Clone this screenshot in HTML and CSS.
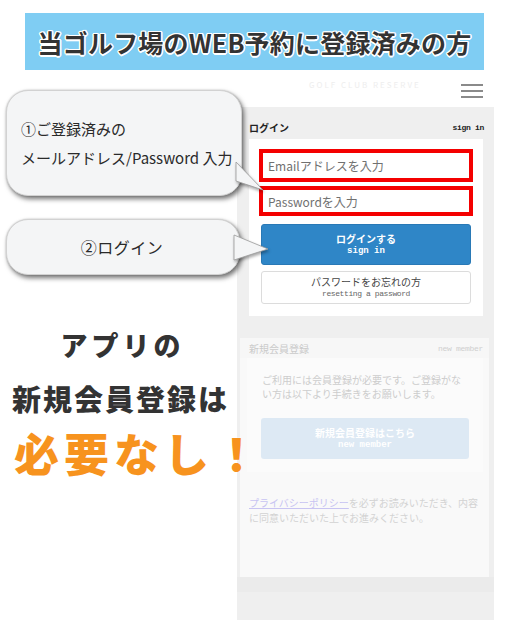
FILE: index.html
```html
<!DOCTYPE html>
<html lang="ja">
<head>
<meta charset="utf-8">
<title>WEB予約登録済みの方</title>
<link rel="stylesheet" href="styles.css">
</head>
<body>
<div class="banner">当ゴルフ場のWEB予約に登録済みの方</div>
<div class="stage">
  <div class="left">
    <div class="bubble bubble-one">
      <p>①ご登録済みの</p>
      <p>メールアドレス/Password 入力</p>
    </div>
    <div class="bubble bubble-two">②ログイン</div>
    <p class="copy copy-a">アプリの</p>
    <p class="copy copy-b">新規会員登録は</p>
    <p class="copy copy-c">必要なし！</p>
  </div>
  <div class="phone">
    <div class="phone-top">
      <span class="faint-logo">GOLF CLUB RESERVE</span>
      <div class="burger"><i></i><i></i><i></i></div>
    </div>
    <div class="phone-body">
      <div class="sec-head">
        <span class="sec-title">ログイン</span>
        <span class="sec-en">sign in</span>
      </div>
      <div class="card">
        <div class="field field-email">Emailアドレスを入力</div>
        <div class="field field-pass">Passwordを入力</div>
        <div class="btn btn-login"><span>ログインする</span><span class="mono">sign in</span></div>
        <div class="btn btn-forgot"><span>パスワードをお忘れの方</span><span class="mono small">resetting a password</span></div>
      </div>
      <div class="faded">
        <div class="faded-head">
          <span class="sec-title">新規会員登録</span>
          <span class="sec-en">new member</span>
        </div>
        <div class="faded-card">
          <p class="faded-text">ご利用には会員登録が必要です。ご登録がない方は以下より手続きをお願いします。</p>
          <div class="btn btn-new"><span>新規会員登録はこちら</span><span class="mono">new member</span></div>
        </div>
        <p class="privacy"><span class="link">プライバシーポリシー</span>を必ずお読みいただき、内容に同意いただいた上でお進みください。</p>
      </div>
      <div class="strip"></div>
    </div>
  </div>
  <svg class="tails" width="300" height="220" viewBox="0 0 300 220">
    <polygon points="236,92 263,120 236,111" fill="#f4f5f6" stroke="#9a9a9a" stroke-width="0.8"/>
    <polygon points="234,165 268,179 234,190" fill="#f4f5f6" stroke="#9a9a9a" stroke-width="0.8"/>
  </svg>
</div>
</body>
</html>
```
FILE: styles.css
```css
* { box-sizing: border-box; }
html, body { margin: 0; padding: 0; }
body {
  width: 506px;
  height: 634px;
  overflow: hidden;
  background: #fff;
  font-family: "Noto Sans CJK JP", "Noto Sans", sans-serif;
  color: #333;
}
p { margin: 0; }

.banner {
  margin: 13px 22px 0 25px;
  height: 57px;
  background: #7fcdf3;
  display: flex;
  align-items: center;
  justify-content: center;
  font-size: 25px;
  font-weight: 700;
  color: #333;
  letter-spacing: 0.2px;
  text-shadow: 1px 1px 0 #fff, -1px -1px 0 #fff, 1px -1px 0 #fff, -1px 1px 0 #fff,
    0 1.5px 0 #fff, 0 -1.5px 0 #fff, 1.5px 0 0 #fff, -1.5px 0 0 #fff;
}

.stage {
  display: flex;
  position: relative;
}
.left {
  width: 237px;
  flex: none;
  position: relative;
  z-index: 2;
}
.bubble {
  background: #f4f5f6;
  border: 1px solid #d2d2d2;
  border-radius: 22px;
  box-shadow: 2px 3px 5px rgba(0, 0, 0, 0.55), 0 0 2px rgba(0, 0, 0, 0.2);
  font-size: 15px;
  color: #2a2a2a;
}
.bubble-one {
  margin: 20px 0 0 6px;
  width: 236px;
  height: 106px;
  padding-left: 14px;
  display: flex;
  flex-direction: column;
  justify-content: center;
  line-height: 29px;
}
.bubble-two {
  margin: 23px 0 0 6px;
  width: 234px;
  height: 56px;
  display: flex;
  align-items: center;
  justify-content: center;
  padding-right: 2px;
  font-size: 16px;
  letter-spacing: 0.5px;
}

.copy {
  text-align: center;
  font-weight: 900;
  color: #333;
  text-shadow: 0 0 2px #fff;
}
.copy-a {
  margin-top: 52px;
  font-size: 27px;
  line-height: 36px;
  letter-spacing: 4px;
  padding-left: 8px;
}
.copy-b {
  margin-top: 15px;
  font-size: 29px;
  line-height: 40px;
  letter-spacing: 2px;
  padding-left: 4px;
}
.copy-c {
  margin-top: 7px;
  font-size: 45px;
  line-height: 56px;
  letter-spacing: 5px;
  color: #f7931e;
  width: 272px;
  padding-left: 6px;
}

.phone {
  width: 257px;
  flex: none;
}
.phone-top {
  height: 37px;
  display: flex;
  align-items: center;
  justify-content: space-between;
  padding: 4px 11px 0 72px;
}
.faint-logo {
  font-size: 8px;
  color: #eeeeee;
  letter-spacing: 2px;
  margin-top: -12px;
}
.burger {
  width: 22px;
  display: flex;
  flex-direction: column;
  gap: 4px;
}
.burger i {
  display: block;
  height: 2px;
  background: #8a8a8a;
}
.phone-body {
  background: #efefef;
  height: 513px;
  padding-top: 13px;
}
.sec-head {
  display: flex;
  justify-content: space-between;
  align-items: center;
  height: 14px;
  padding: 0 10px 0 12px;
}
.sec-title {
  font-size: 10px;
  font-weight: 700;
  color: #222;
}
.sec-en {
  font-family: "Liberation Mono", "DejaVu Sans Mono", monospace;
  font-size: 8px;
  font-weight: 700;
  letter-spacing: -0.3px;
  color: #222;
}
.card {
  margin: 5px 11px 0 12px;
  background: #fff;
  padding: 10px 10px 12px 10px;
}
.field {
  border: 4px solid #f40000;
  background: #fff;
  font-size: 12px;
  color: #707070;
  display: flex;
  align-items: center;
  padding-left: 5px;
}
.field-email { height: 33px; }
.field-pass { height: 30px; margin-top: 4px; }
.btn {
  margin: 0 2px;
  border-radius: 3px;
  display: flex;
  flex-direction: column;
  align-items: center;
  justify-content: center;
  font-size: 10px;
  line-height: 12px;
}
.btn-login {
  margin-top: 8px;
  height: 41px;
  background: #2f86c7;
  border: 1px solid #2979b6;
  color: #fff;
  font-weight: 700;
}
.mono {
  font-family: "Liberation Mono", "DejaVu Sans Mono", monospace;
  font-size: 9px;
}
.mono.small {
  font-size: 8px;
  letter-spacing: -0.4px;
  color: #666;
  font-weight: 400;
}
.btn-forgot {
  margin-top: 6px;
  height: 33px;
  background: #fff;
  border: 1px solid #dcdcdc;
  color: #444;
}

.faded {
  margin: 22px 5px 0 3px;
  height: 239px;
  background: #f9f9f9;
}
.faded-head {
  height: 20px;
  display: flex;
  justify-content: space-between;
  align-items: center;
  padding: 0 6px 0 9px;
  background: #f7f7f7;
}
.faded-head .sec-title { color: #cacaca; font-weight: 400; }
.faded-head .sec-en { color: #cfcfcf; font-weight: 400; }
.faded-card {
  margin: 0 6px 0 7px;
  background: #fbfbfb;
  padding: 15px 16px 13px 15px;
}
.faded-text {
  font-size: 10px;
  line-height: 14px;
  color: #cdcdcd;
  width: 206px;
}
.btn-new {
  margin: 17px 0 0 -1px;
  width: 208px;
  height: 41px;
  background: #dde9f4;
  color: #fff;
  font-weight: 700;
}
.privacy {
  margin-top: 23px;
  padding: 0 8px 0 9px;
  font-size: 10px;
  line-height: 15px;
  color: #d3d3d3;
}
.link {
  color: #c8c4f2;
  text-decoration: underline;
}
.strip {
  height: 15px;
  background: #ebebeb;
}

.tails {
  position: absolute;
  left: 0;
  top: 0;
  z-index: 3;
  pointer-events: none;
  filter: drop-shadow(1px 2px 1.5px rgba(0, 0, 0, 0.35));
}
```
